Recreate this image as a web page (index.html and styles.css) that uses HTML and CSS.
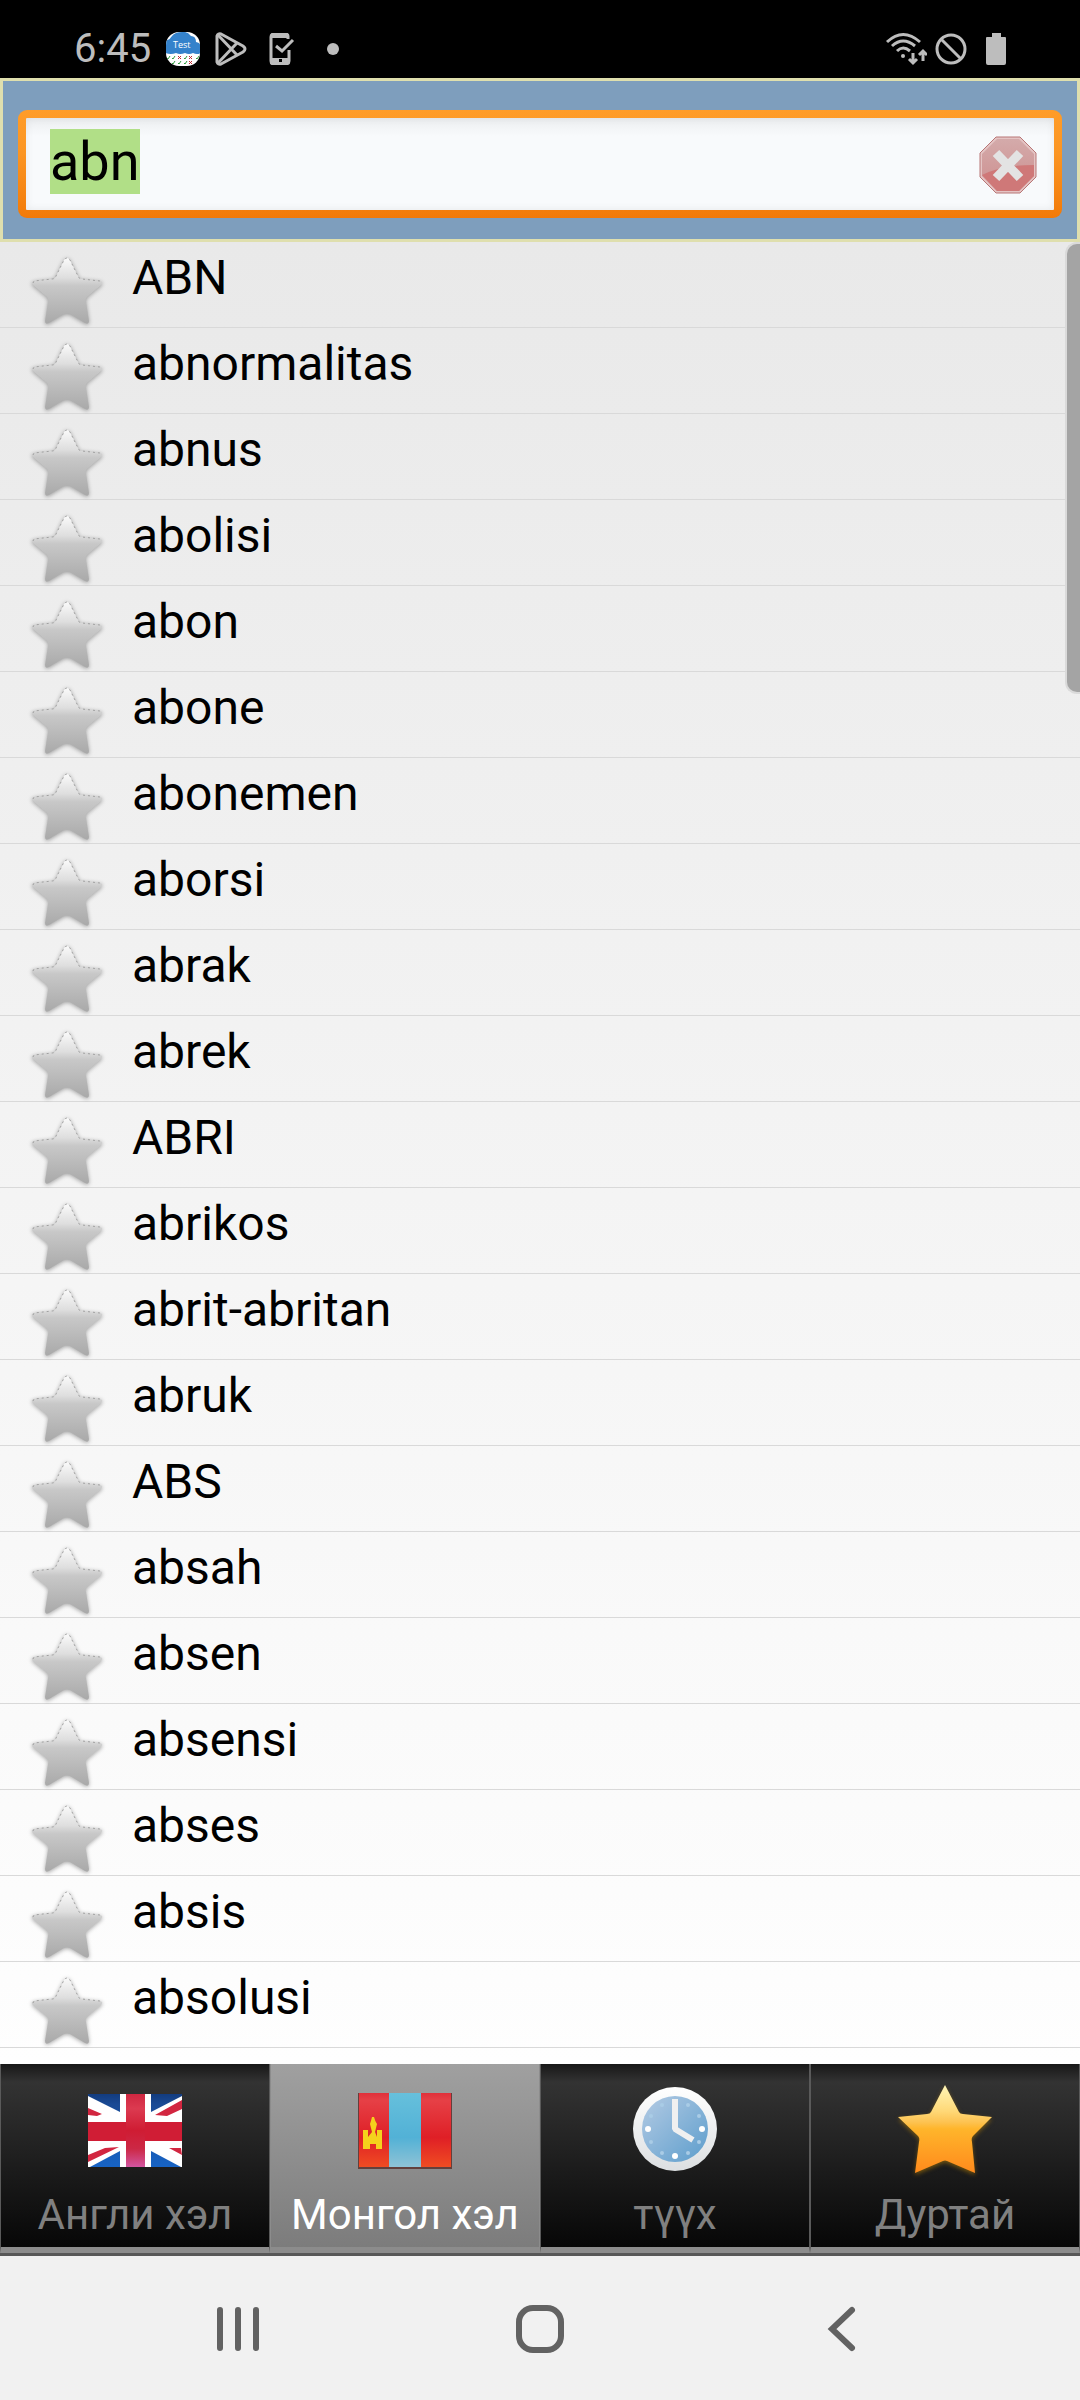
FILE: index.html
```html
<!DOCTYPE html>
<html lang="mn">
  <head>
    <meta charset="utf-8" />
    <meta name="viewport" content="width=device-width, initial-scale=1" />
    <title>abn</title>
    <link rel="stylesheet" href="styles.css">
  </head>
  <body>
    <!-- shared star icon -->
    <svg class="defs" aria-hidden="true">
      <defs>
        <linearGradient id="silver" x1="0" y1="0" x2="0" y2="1">
          <stop offset="0" stop-color="#fafafa" />
          <stop offset="0.3" stop-color="#dedede" />
          <stop offset="0.42" stop-color="#c8c8c8" />
          <stop offset="1" stop-color="#a9a9a9" />
        </linearGradient>
        <symbol id="star" viewBox="0 0 72 72">
          <path d="M33 3Q36 -1 39 3L47 19Q48 22 51 22L69 24Q73 25 70 28L56 40Q54 42 55 45L58 64Q58 68 54 66L39 57Q36 56 33 57L18 66Q14 68 14 64L17 45Q18 42 16 40L2 28Q-1 25 3 24L21 22Q24 22 25 19Z" fill="url(#silver)" />
          <path d="M2 26L3 24L21 22Q24 22 25 19L33 3Q36 -1 39 3L47 19Q48 22 51 22L69 24L70 26" fill="none" stroke="#a0a0a0" stroke-width="1" stroke-dasharray="2 3" />
        </symbol>
      </defs>
    </svg>

    <div class="status">
      <span class="clock">6:45</span>
      <svg class="app-icon" viewBox="0 0 36 36">
        <clipPath id="round"><rect x="1" y="1" width="34" height="34" rx="13" /></clipPath>
        <g clip-path="url(#round)">
          <rect width="36" height="36" fill="#fff" />
          <path d="M0 10Q5 9 7 5Q10 1 17 1Q22 0 26 5Q31 5 31 11Q36 12 36 16V22Q32 24 28 22Q24 24 20 22Q15 24 11 22Q6 24 0 22Z" fill="#3482cb" />
          <g fill="none" stroke-width="1">
            <path d="M2 27l1 1 2-3M7 27l1 1 2-3M19 27l1 1 2-3M31 27l1 1 2-3M7 32l1 1 2-3M13 32l1 1 2-3M19 32l1 1 2-3M30 32l1 1 2-3" stroke="#2f9a3c" />
            <path d="M13 25l3 3m0-3l-3 3M24 25l3 3m0-3l-3 3M24 30l3 3m0-3l-3 3" stroke="#c02830" />
          </g>
        </g>
        <text x="8" y="17" font-size="9" fill="#fff">Test</text>
      </svg>
      <svg class="play-icon" viewBox="0 0 32 34">
        <g fill="none" stroke="#bdbdbd" stroke-width="3" stroke-linejoin="round">
          <path d="M2 4Q3 1 6 2L28 14Q32 17 28 20L6 32Q3 33 2 30Z" />
          <path d="M3 3L22 23M3 31L22 11" />
        </g>
      </svg>
      <svg class="check-icon" viewBox="0 0 26 32">
        <path d="M19 6V3Q19 1 16 1H5Q2 1 2 4V28Q2 31 5 31H16Q20 31 20 28V17" fill="none" stroke="#bdbdbd" stroke-width="3" />
        <path d="M2 25H20V28Q20 31 17 31H5Q2 31 2 28ZM2 1H19V5H2Z" fill="#bdbdbd" />
        <path d="M7 13L13 18L24 7" fill="none" stroke="#bdbdbd" stroke-width="3" />
        <rect x="10" y="26" width="3" height="3" fill="#000" />
      </svg>
      <span class="dot"></span>
      <span class="spacer"></span>
      <svg class="wifi-icon" viewBox="0 0 42 34">
        <g fill="none" stroke="#bdbdbd" stroke-width="3">
          <path d="M2 10Q18 -5 35 10M7 14Q18 4 30 14M12 19Q18 13 25 19" />
          <path d="M28 21V30M24 27l4 4 4-4M38 29V20M34 23l4-4 4 4" />
        </g>
        <circle cx="18" cy="24" r="2" fill="#bdbdbd" />
      </svg>
      <svg class="block-icon" viewBox="0 0 32 32">
        <g fill="none" stroke="#bdbdbd" stroke-width="3">
          <circle cx="16" cy="16" r="14" />
          <path d="M6 6L26 26" />
        </g>
      </svg>
      <svg class="battery-icon" viewBox="0 0 20 32">
        <path d="M6 0h9v4h4q1 0 1 1v25q0 2-2 2H2q-2 0-2-2V5q0-1 1-1h5Z" fill="#bdbdbd" />
      </svg>
    </div>

    <header class="search">
      <div class="search-box">
        <input type="text" id="query" class="query" value="abn" aria-label="abn">
        <button class="clear" aria-label="Clear">
          <svg viewBox="0 0 58 58">
            <defs>
              <linearGradient id="stop-red" x1="0" y1="0" x2="0" y2="1">
                <stop offset="0" stop-color="#d4aaaa" />
                <stop offset="1" stop-color="#cd8f8f" />
              </linearGradient>
            </defs>
            <path d="M17 1H41L57 17V41L41 57H17L1 41V17Z" fill="#e4c4c4" stroke="#b87777" stroke-width="1" />
            <path d="M18 3H40L55 18V40L40 55H18L3 40V18Z" fill="url(#stop-red)" />
            <path d="M3 39Q22 29 55 29V40L40 55H18Z" fill="#cf7878" />
            <path d="M17 17L41 42M41 17L17 42" stroke="#e3e3e3" stroke-width="9" />
          </svg>
        </button>
      </div>
    </header>

    <main class="words">
      <ul>
        <li><button class="fav" aria-label="ABN"><svg><use href="#star" /></svg></button><span>ABN</span></li>
        <li><button class="fav" aria-label="abnormalitas"><svg><use href="#star" /></svg></button><span>abnormalitas</span></li>
        <li><button class="fav" aria-label="abnus"><svg><use href="#star" /></svg></button><span>abnus</span></li>
        <li><button class="fav" aria-label="abolisi"><svg><use href="#star" /></svg></button><span>abolisi</span></li>
        <li><button class="fav" aria-label="abon"><svg><use href="#star" /></svg></button><span>abon</span></li>
        <li><button class="fav" aria-label="abone"><svg><use href="#star" /></svg></button><span>abone</span></li>
        <li><button class="fav" aria-label="abonemen"><svg><use href="#star" /></svg></button><span>abonemen</span></li>
        <li><button class="fav" aria-label="aborsi"><svg><use href="#star" /></svg></button><span>aborsi</span></li>
        <li><button class="fav" aria-label="abrak"><svg><use href="#star" /></svg></button><span>abrak</span></li>
        <li><button class="fav" aria-label="abrek"><svg><use href="#star" /></svg></button><span>abrek</span></li>
        <li><button class="fav" aria-label="ABRI"><svg><use href="#star" /></svg></button><span>ABRI</span></li>
        <li><button class="fav" aria-label="abrikos"><svg><use href="#star" /></svg></button><span>abrikos</span></li>
        <li><button class="fav" aria-label="abrit-abritan"><svg><use href="#star" /></svg></button><span>abrit-abritan</span></li>
        <li><button class="fav" aria-label="abruk"><svg><use href="#star" /></svg></button><span>abruk</span></li>
        <li><button class="fav" aria-label="ABS"><svg><use href="#star" /></svg></button><span>ABS</span></li>
        <li><button class="fav" aria-label="absah"><svg><use href="#star" /></svg></button><span>absah</span></li>
        <li><button class="fav" aria-label="absen"><svg><use href="#star" /></svg></button><span>absen</span></li>
        <li><button class="fav" aria-label="absensi"><svg><use href="#star" /></svg></button><span>absensi</span></li>
        <li><button class="fav" aria-label="abses"><svg><use href="#star" /></svg></button><span>abses</span></li>
        <li><button class="fav" aria-label="absis"><svg><use href="#star" /></svg></button><span>absis</span></li>
        <li><button class="fav" aria-label="absolusi"><svg><use href="#star" /></svg></button><span>absolusi</span></li>
      </ul>
      <div class="scroll-thumb"></div>
    </main>

    <div class="tabs">
      <button class="tab">
        <svg viewBox="0 0 96 96">
          <defs>
            <linearGradient id="uk-blue" gradientUnits="userSpaceOnUse" x1="0" y1="11" x2="0" y2="85">
              <stop offset="0" stop-color="#123a7c" />
              <stop offset="0.15" stop-color="#1a4a94" />
              <stop offset="1" stop-color="#1763c4" />
            </linearGradient>
            <linearGradient id="uk-red" x1="0" y1="0" x2="0" y2="1">
              <stop offset="0" stop-color="#cf2741" />
              <stop offset="0.2" stop-color="#dc3a50" />
              <stop offset="0.5" stop-color="#cf1c33" />
              <stop offset="0.75" stop-color="#cc2845" />
              <stop offset="1" stop-color="#d256a0" />
            </linearGradient>
          </defs>
          <rect x="1" y="12" width="94" height="73" fill="#fff" />
          <path d="M1 12H33V30L1 14ZM64 12H95V14L64 30ZM33 69V85H3ZM64 69V85H94Z" fill="url(#uk-blue)" />
          <path d="M1 26L15 32L10 34L1 33ZM68 33L95 18V27L80 34ZM1 73L18 66L32 65L1 80ZM82 66H94L95 73Z" fill="#d22640" />
          <rect x="1" y="40" width="94" height="19" fill="#d01d35" />
          <rect x="39" y="12" width="19" height="73" fill="url(#uk-red)" />
        </svg>
        <span>Англи хэл</span>
      </button>
      <button class="tab selected">
        <svg viewBox="0 0 96 96">
          <defs>
            <linearGradient id="mn-red" x1="0" y1="0" x2="0" y2="1">
              <stop offset="0" stop-color="#e0303a" />
              <stop offset="0.1" stop-color="#e64046" />
              <stop offset="0.6" stop-color="#df1f26" />
              <stop offset="1" stop-color="#f04c22" />
            </linearGradient>
            <linearGradient id="mn-blue" x1="0" y1="0" x2="0" y2="1">
              <stop offset="0" stop-color="#66c0dc" />
              <stop offset="0.6" stop-color="#52b1d6" />
              <stop offset="1" stop-color="#8fc3d6" />
            </linearGradient>
          </defs>
          <rect x="1" y="11" width="94" height="76" fill="#63403c" />
          <rect x="2" y="11" width="92" height="74" fill="url(#mn-red)" />
          <rect x="32" y="11" width="32" height="74" fill="url(#mn-blue)" />
          <path d="M6 48h5v7l4-5-2-8q1-3 2-7h2q1 4 3 7l-2 8 2 5v-7h5v19h-6v-5h-6v5H6Z" fill="#f5d21c" />
        </svg>
        <span>Монгол хэл</span>
      </button>
      <button class="tab">
        <svg viewBox="0 0 96 96">
          <defs>
            <linearGradient id="rim" x1="0" y1="0" x2="0" y2="1">
              <stop offset="0" stop-color="#fff" />
              <stop offset="1" stop-color="#dcdfe1" />
            </linearGradient>
            <linearGradient id="face" x1="0" y1="0" x2="1" y2="1">
              <stop offset="0" stop-color="#b4cbe4" />
              <stop offset="1" stop-color="#5c9dcc" />
            </linearGradient>
          </defs>
          <circle cx="48" cy="47" r="42" fill="url(#rim)" />
          <circle cx="48" cy="47" r="33" fill="url(#face)" />
          <g fill="#fff">
            <circle cx="21" cy="47" r="3" />
            <circle cx="75" cy="47" r="3" />
            <circle cx="48" cy="74" r="3" />
          </g>
          <g fill="#a9cce6">
            <circle cx="61" cy="23" r="2" />
            <circle cx="72" cy="34" r="2" />
            <circle cx="72" cy="60" r="2" />
            <circle cx="61" cy="71" r="2" />
            <circle cx="35" cy="71" r="2" />
            <circle cx="24" cy="60" r="2" />
            <circle cx="24" cy="34" r="2" />
            <circle cx="35" cy="23" r="2" />
          </g>
          <path d="M48 17V47L66 58" fill="none" stroke="#f0f0f0" stroke-width="6" stroke-linejoin="bevel" />
        </svg>
        <span>түүх</span>
      </button>
      <button class="tab">
        <svg class="gold-star" viewBox="0 0 96 96">
          <defs>
            <linearGradient id="gold" x1="0" y1="0" x2="0" y2="1">
              <stop offset="0" stop-color="#fff6b8" />
              <stop offset="0.3" stop-color="#ffd876" />
              <stop offset="0.42" stop-color="#fdc352" />
              <stop offset="0.5" stop-color="#ffb52b" />
              <stop offset="1" stop-color="#ff8a1c" />
            </linearGradient>
          </defs>
          <path d="M48 3L62 30Q63 32 66 32L95 35L76 54Q74 56 75 60L78 91L50 79Q48 78 46 79L18 91L22 60Q23 56 21 54L1 35L30 32Q33 32 34 30Z" fill="url(#gold)" />
        </svg>
        <span>Дуртай</span>
      </button>
    </div>

    <nav class="system-nav">
      <button aria-label="Recents">
        <svg viewBox="0 0 48 48"><path d="M6 5V43M24 5V43M42 5V43" /></svg>
      </button>
      <button aria-label="Home">
        <svg viewBox="0 0 48 48"><rect x="3" y="3" width="42" height="42" rx="14" /></svg>
      </button>
      <button aria-label="Back">
        <svg viewBox="0 0 48 48"><path d="M34 5L14 24L34 43" /></svg>
      </button>
    </nav>

    <script>
      const query = document.getElementById("query");
      query.focus();
      query.select();

      document.querySelector(".clear").addEventListener("click", () => {
        query.value = "";
        query.focus();
      });
    </script>
  </body>
</html>
```
FILE: styles.css
```css
* {
  box-sizing: border-box;
}

body {
  margin: 0;
  min-height: 100vh;
  display: flex;
  flex-direction: column;
  font-family: Roboto, "Noto Sans", sans-serif;
  color: #000;
  background-color: #fdfdfd;
}

button {
  padding: 0;
  border: 0;
  background: none;
  font-family: inherit;
  cursor: pointer;
}

svg {
  display: block;
}

.defs {
  position: absolute;
  width: 0;
  height: 0;
}

/* status bar */
.status {
  display: flex;
  align-items: center;
  height: 78px;
  padding: 20px 74px 0 74px;
  background-color: #000;
}

.clock {
  font-size: 40px;
  line-height: 48px;
  color: #bdbdbd;
  margin-right: 14px;
}

.app-icon {
  width: 36px;
  height: 36px;
  margin-right: 14px;
  font-family: "Open Sans", sans-serif;
}

.play-icon {
  width: 32px;
  height: 34px;
  margin-right: 22px;
}

.check-icon {
  width: 26px;
  height: 32px;
  margin-right: 32px;
}

.dot {
  width: 12px;
  height: 12px;
  border-radius: 50%;
  background-color: #bdbdbd;
}

.spacer {
  flex: 1;
}

.wifi-icon {
  width: 42px;
  height: 34px;
  margin-right: 8px;
}

.block-icon {
  width: 32px;
  height: 32px;
  margin-right: 19px;
}

.battery-icon {
  width: 20px;
  height: 32px;
}

/* search */
.search {
  padding: 29px 15px 21px;
  border: 3px solid #dfdfae;
  background-color: #7e9ebd;
}

.search-box {
  display: flex;
  align-items: flex-end;
  padding: 11px 17px 16px 24px;
  border: 8px solid transparent;
  border-radius: 9px;
  background:
    linear-gradient(#eceef0, #f8fafc 18px) padding-box,
    linear-gradient(#ff9c28, #fb9523 40%, #f27a08) border-box;
  box-shadow: inset 0 0 8px rgba(0, 0, 0, 0.08);
}

.query {
  flex: 1;
  min-width: 0;
  padding: 0;
  border: 0;
  outline: 0;
  background: transparent;
  font-family: inherit;
  font-size: 54px;
  line-height: 65px;
  color: #000;
}

.query::selection {
  background-color: #b1df87;
  color: #000;
}

.clear svg {
  width: 58px;
  height: 58px;
}

/* word list */
.words {
  position: relative;
  flex: 1;
  background: linear-gradient(#e9e9e9, #fefefe);
}

.words ul {
  margin: 0;
  padding: 0;
  list-style: none;
}

.words li {
  display: flex;
  align-items: flex-start;
  gap: 29px;
  height: 86px;
  padding: 8px 31px 0;
  border-bottom: 1px solid #d9d9d9;
  font-size: 48px;
  line-height: 56px;
}

.fav {
  margin-top: 7px;
}

.fav svg {
  width: 72px;
  height: 72px;
  filter: drop-shadow(0 1px 2px rgba(0, 0, 0, 0.35));
}

.scroll-thumb {
  position: absolute;
  top: 0;
  right: 0;
  width: 15px;
  height: 452px;
  border: 2px solid #dadada;
  border-right: 0;
  border-radius: 12px 0 0 12px;
  background-color: #a4a4a4;
}

/* tabs */
.tabs {
  display: grid;
  grid-template-columns: repeat(4, 1fr);
  border-bottom: 3px solid #585858;
}

.tab {
  display: flex;
  flex-direction: column;
  align-items: center;
  gap: 12px;
  padding: 18px 0 8px;
  border: 1px solid #5a5a5a;
  border-top: 0;
  border-bottom: 6px solid #8c8c8c;
  background: linear-gradient(#171717, #333 18px, #070707);
  color: #808080;
  font-size: 42px;
  line-height: 49px;
}

.tab svg {
  width: 96px;
  height: 96px;
}

.tab.selected {
  border-color: #8c8c8c;
  background: linear-gradient(#a0a0a0, #7c7c7c);
  color: #fff;
}

.gold-star {
  filter: drop-shadow(0 2px 2px rgba(200, 140, 0, 0.5));
}

/* system navigation */
.system-nav {
  display: grid;
  grid-template-columns: repeat(3, 1fr);
  height: 144px;
  padding: 2px 8% 0;
  background-color: #f1f1f1;
}

.system-nav svg {
  width: 48px;
  height: 48px;
  margin: 0 auto;
  fill: none;
  stroke: #626262;
  stroke-width: 6;
  stroke-linecap: round;
}
```
